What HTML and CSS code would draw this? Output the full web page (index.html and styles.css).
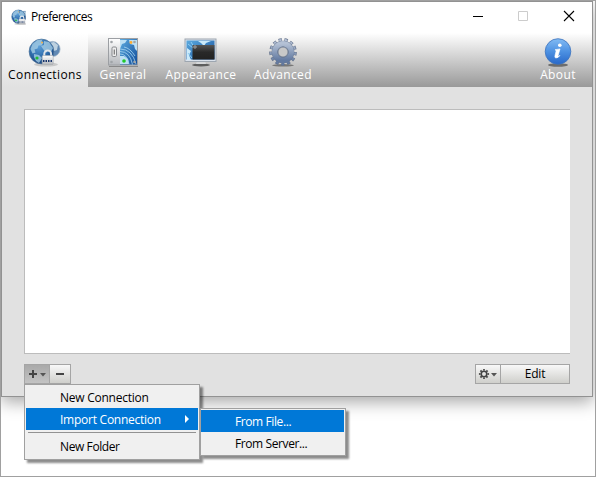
FILE: index.html
```html
<!DOCTYPE html>
<html lang="en">
<head>
<meta charset="utf-8">
<title>Preferences</title>
<link rel="stylesheet" href="styles.css">
</head>
<body>
<svg class="defs" width="0" height="0" aria-hidden="true">
  <defs>
    <radialGradient id="ocean" cx=".4" cy=".3" r=".75"><stop offset="0" stop-color="#5d9fd8"/><stop offset=".6" stop-color="#2b68a8"/><stop offset="1" stop-color="#173e75"/></radialGradient>
    <linearGradient id="map" x2="1" y2="1"><stop offset="0" stop-color="#5cabe0"/><stop offset="1" stop-color="#124d9a"/></linearGradient>
    <linearGradient id="steel" x2="0" y2="1"><stop offset="0" stop-color="#b4c1d5"/><stop offset="1" stop-color="#6279a0"/></linearGradient>
    <linearGradient id="metal" x2="0" y2="1"><stop offset="0" stop-color="#fff"/><stop offset="1" stop-color="#b5b8bc"/></linearGradient>
    <linearGradient id="dark" x2="0" y2="1"><stop offset="0" stop-color="#555"/><stop offset=".5" stop-color="#292929"/><stop offset="1" stop-color="#222"/></linearGradient>
    <linearGradient id="info" x2="0" y2="1"><stop offset="0" stop-color="#82bbf4"/><stop offset=".5" stop-color="#4d91e2"/><stop offset="1" stop-color="#2868c9"/></linearGradient>
    <symbol id="globe" viewBox="0 0 34 30">
      <ellipse cx="18" cy="26.5" rx="12" ry="2" fill="#777" opacity=".3"/>
      <circle cx="24.5" cy="11" r="7.6" fill="#6189b4" stroke="#9eb3c6" stroke-width=".7"/>
      <path d="M21 5l5-1 4 3-1 5-3 1-1 4-3-3 1-4-3-2z" fill="#dce9ef" opacity=".75"/>
      <circle cx="13.5" cy="13.5" r="12.4" fill="url(#ocean)" stroke="#557799" stroke-width=".7"/>
      <path d="M2.5 11l2-5 5-4 5-.5-1 2 2 1-2 3-3 0-1 3-3 1 1 3-3 1zM16 3l5 1 4 6-2 4-3-2-2 3-3-4-2-3 3-1zM6 16l5 1 3 3-3 5-3-2-2-4z" fill="#a4cce4" opacity=".8"/>
      <circle cx="9" cy="20" r="1.6" fill="#21bd35"/><circle cx="14" cy="4.5" r="1" fill="#f2b24b"/>
      <path d="M16.3 19v-3.2a3.4 3.4 0 0 1 6.8 0V19" fill="none" stroke="#e2e6ea" stroke-width="2"/>
      <rect x="14.2" y="17.5" width="11" height="9" rx="1" fill="url(#metal)" stroke="#a5a9af" stroke-width=".6"/>
      <path d="M15 23h9.5" stroke="#17336b" stroke-width="1.8" stroke-dasharray="1.5 1"/>
    </symbol>
  </defs>
</svg>
<main class="window">
  <header class="titlebar">
    <svg class="app-icon" viewBox="0 0 27 28"><use href="#globe" width="34" height="30"/></svg>
    <span class="title">Preferences</span>
    <svg class="controls" viewBox="0 0 110 16"><path d="M3 8.5h10" stroke="#000"/><path d="M48.5 3.5h9v9h-9z" fill="none" stroke="#ccc"/><path d="M94 3l10 10M104 3L94 13" stroke="#000" stroke-width="1.1"/></svg>
  </header>
  <nav class="toolbar">
    <div class="tab active"><svg class="globes" viewBox="0 0 34 30"><use href="#globe" width="34" height="30"/></svg><span>Connections</span></div>
    <div class="tab general">
      <svg viewBox="0 0 32 30">
        <path d="M2 28.5h29" stroke="#666" opacity=".6"/>
        <rect x="1.5" y=".5" width="29" height="26.5" fill="url(#metal)" stroke="#9c9fa3"/>
        <rect x="13" y="1" width="17" height="25.5" fill="url(#map)"/>
        <path d="M13 2h7l-2 3-3 1-2 5zM22 2h8v11l-2-2-1-4-4-1zM13 18l4 0 4 3 1 5h-9z" fill="#bde0f4"/>
        <g fill="none" stroke="#a6d5f1" stroke-width=".8"><path d="M13 16q7 0 9 10M13 13.5q10 0 12.5 13M13 11q12 0 16 15"/><path d="M17 9q6 1 11 9"/></g>
        <circle cx="17" cy="23" r="1.8" fill="#20c829"/><circle cx="24" cy="4.5" r="1.4" fill="#ffad31"/>
        <rect x="5" y="9" width="4.5" height="9.5" rx="1.2" fill="#eee" stroke="#85888c"/><path d="M7.3 11.5v5" stroke="#777" stroke-width="1.2"/>
        <g fill="#a0a4a8"><circle cx="4.5" cy="4" r="1.3"/><circle cx="27.5" cy="4" r="1.3"/><circle cx="4.5" cy="24" r="1.3"/><circle cx="27.5" cy="24" r="1.3"/></g>
      </svg><span>General</span></div>
    <div class="tab appearance">
      <svg viewBox="0 0 34 30">
        <ellipse cx="17" cy="27" rx="9" ry="1.5" fill="#333" opacity=".7"/>
        <path d="M13 23h8l1 3H12z" fill="#d6d8da"/>
        <rect x="1" y="1" width="31" height="22.5" fill="#d9e1eb" stroke="#9da6b0"/>
        <rect x="2.5" y="2.5" width="28" height="19" fill="url(#map)"/>
        <path d="M14 3h13l-5 2-2 3-3-3zM3 10l4 3-2 4 2 5H3z" fill="#cbeafa"/>
        <path d="M4 6l5 4M7 4l3 5M4 15l4 5" stroke="#8dcdf1"/>
        <rect x="8.5" y="7" width="22" height="14.5" fill="url(#dark)"/>
        <circle cx="11" cy="9" r="1.2" fill="none" stroke="#bbb" stroke-width=".8"/>
      </svg><span>Appearance</span></div>
    <div class="tab advanced">
      <svg viewBox="0 0 30 30">
        <ellipse cx="15" cy="27.3" rx="11" ry="1.3" fill="#444" opacity=".6"/>
        <circle cx="15" cy="14" r="11.8" fill="none" stroke="#65738c" stroke-width="4" pathLength="130" stroke-dasharray="5.6 4.4"/>
        <circle cx="15" cy="14" r="11.5" fill="none" stroke="url(#steel)" stroke-width="3.3" pathLength="130" stroke-dasharray="4.2 5.8" stroke-dashoffset="-.7"/>
        <circle cx="15" cy="14" r="8.2" fill="none" stroke="#65738c" stroke-width="6.2"/>
        <circle cx="15" cy="14" r="8.3" fill="none" stroke="url(#steel)" stroke-width="5.4"/>
        <circle cx="15" cy="14" r="5" fill="#c8c8c8" stroke="#65738c" stroke-width=".8"/>
      </svg><span>Advanced</span></div>
    <div class="tab about">
      <svg viewBox="0 0 30 30">
        <ellipse cx="15" cy="27" rx="10" ry="1.8" fill="#333" opacity=".6"/>
        <circle cx="15" cy="13.5" r="12.8" fill="url(#info)" stroke="#3c72bd" stroke-width=".8"/>
        <circle cx="16.8" cy="7.3" r="1.8" fill="#fff"/><path d="M12 11.7l5-.8-2 7q-.2 1 2-.5-1.8 2.6-4.1 2.6-1.6-.2-.9-2.6l1.2-4.6z" fill="#fff" stroke="#fff" stroke-width=".6"/>
      </svg><span>About</span></div>
  </nav>
  <section class="panel">
    <div class="list"></div>
    <div class="actions">
      <div class="group">
        <button class="add" aria-label="Add"><svg viewBox="0 0 24 18"><path d="M4 9h8M8 5v8" stroke="#444" stroke-width="2"/><path d="M15 8h6l-3 3.5z" fill="#555"/></svg></button>
        <button class="remove" aria-label="Remove"><svg viewBox="0 0 20 18"><path d="M6 9h8" stroke="#444" stroke-width="2"/></svg></button>
      </div>
      <div class="group">
        <button class="gear" aria-label="Actions"><svg viewBox="0 0 24 18"><circle cx="8" cy="9" r="2.8" fill="none" stroke="#444" stroke-width="1.6"/><circle cx="8" cy="9" r="4.2" fill="none" stroke="#444" stroke-width="1.8" pathLength="80" stroke-dasharray="5 5" stroke-dashoffset="2.5"/><path d="M15 8h6l-3 3.5z" fill="#555"/></svg></button>
        <button class="edit">Edit</button>
      </div>
    </div>
  </section>
</main>
<div class="menu main-menu">
  <div class="item">New Connection</div>
  <div class="item selected">Import Connection<i class="arrow"></i></div>
  <hr>
  <div class="item">New Folder</div>
</div>
<div class="menu submenu">
  <div class="item selected">From File...</div>
  <div class="item">From Server...</div>
</div>
</body>
</html>
```
FILE: styles.css
```css
* { box-sizing: border-box; }
body {
  position: relative;
  width: 596px;
  height: 477px;
  margin: 0;
  overflow: hidden;
  border: 1px solid #a0a0a0;
  background: #fff;
  color: #000;
  font: 12px "Open Sans", "Noto Sans", sans-serif;
}
svg { display: block; }
.defs { position: absolute; }
.window {
  display: flex;
  flex-direction: column;
  width: 592px;
  height: 396px;
  border: 1px solid #929292;
  background: #e1e1e1;
  box-shadow: 0 5px 16px rgba(0,0,0,.35);
}
.titlebar {
  display: flex;
  align-items: center;
  height: 31px;
  padding: 0 12px 3px 9px;
  background: #fff;
}
.app-icon { width: 15px; height: 16px; margin-top: 1px; }
.title { margin-left: 5px; letter-spacing: -.52px; }
.controls { width: 110px; height: 16px; margin-left: auto; }
.toolbar {
  display: flex;
  height: 54px;
  background: linear-gradient(#fff, #999);
  color: #fff;
  font-size: 12px;
  letter-spacing: .38px;
}
.tab {
  display: flex;
  flex-direction: column;
  align-items: center;
  padding-top: 5px;
  white-space: nowrap;
}
.tab svg { width: 32px; height: 30px; flex: none; }
.tab .globes { width: 34px; }
.tab span { line-height: 13px; }
.active {
  width: 86px;
  background: linear-gradient(#fff, #e1e1e1);
  color: #000;
}
.general { width: 70px; }
.appearance { width: 86px; }
.tab.appearance svg { width: 34px; }
.advanced { width: 78px; }
.tab.advanced svg, .tab.about svg { width: 30px; }
.about { width: 68px; margin-left: auto; }
.panel { flex: 1; padding: 22px 22px 0; }
.list {
  height: 245px;
  border: solid #bcbcbc;
  border-width: 1px 0 1px 1px;
  background: #fff;
}
.actions { display: flex; justify-content: space-between; margin-top: 10px; }
.group { display: flex; }
button {
  height: 20px;
  margin: 0;
  padding: 0;
  border: 1px solid #a5a5a5;
  background: linear-gradient(#f8f8f8, #cfcfcb);
  color: #000;
  font: inherit;
  line-height: 18px;
}
button + button { border-left: 0; }
button svg { width: 100%; height: 18px; }
.add { width: 26px; background: linear-gradient(#a9a9a9, #c3c3c3); }
.remove { width: 21px; }
.gear { width: 26px; }
.edit { width: 69px; letter-spacing: -.2px; }
.menu {
  position: absolute;
  border: 1px solid #a0a0a0;
  background: #f0f0f0;
  box-shadow: 3px 3px 2px rgba(0,0,0,.45);
  letter-spacing: -.25px;
}
.main-menu { top: 383px; left: 23px; width: 176px; height: 76px; padding: 1px; }
.submenu { top: 407px; left: 199px; width: 146px; height: 48px; padding: 1px 1px 1px 0; letter-spacing: -.4px; }
.item {
  display: flex;
  align-items: center;
  height: 22px;
  padding: 0 9px 0 34px;
}
.main-menu .item:last-child { height: 20px; letter-spacing: -.4px; }
.selected { background: #0078d7; color: #fff; }
.arrow {
  margin-left: auto;
  border: solid transparent;
  border-width: 4px 0 4px 4px;
  border-left-color: #fff;
}
hr { height: 1px; margin: 2px 2px 3px; border: 0; background: #929292; }
```
